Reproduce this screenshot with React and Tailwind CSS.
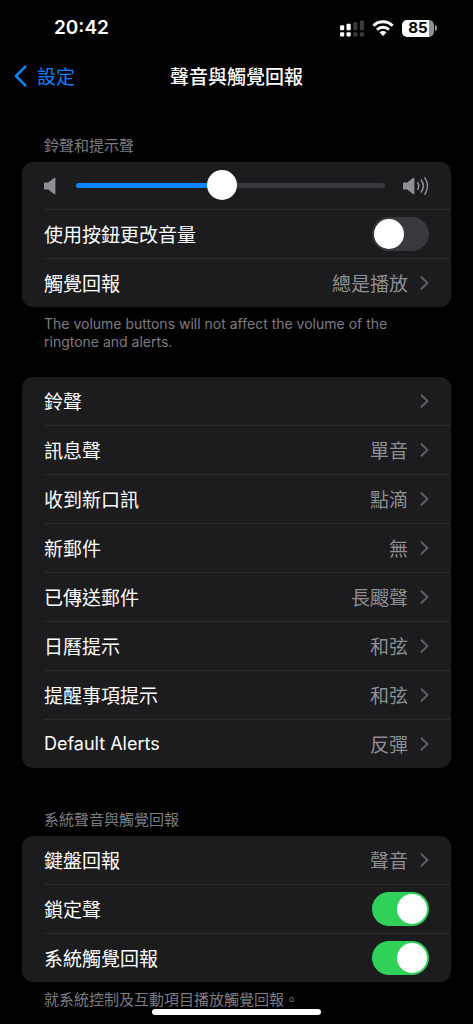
import React, { useState } from "react";

const alertSounds = [
  { label: "鈴聲", value: "" },
  { label: "訊息聲", value: "單音" },
  { label: "收到新口訊", value: "點滴" },
  { label: "新郵件", value: "無" },
  { label: "已傳送郵件", value: "長颼聲" },
  { label: "日曆提示", value: "和弦" },
  { label: "提醒事項提示", value: "和弦" },
  { label: "Default Alerts", value: "反彈", latin: true },
];

const StatusBar = () => (
  <div className="flex items-center justify-between h-14 pl-[54px] pr-9 font-['Inter',sans-serif]">
    <span className="text-[19px] leading-6 font-semibold">20:42</span>
    <div className="flex items-center gap-2">
      {/* Dual SIM signal */}
      <svg width="24" height="18" viewBox="0 0 24 18" aria-hidden="true">
        <g fill="#fff">
          <rect x="0" y="6.2" width="4.2" height="5" rx="1" />
          <rect x="6.500" y="4.700" width="4.200" height="6.500" rx="1" />
          <rect x="0" y="13.200" width="4.200" height="4.200" rx="1" />
          <rect x="6.500" y="13.200" width="4.200" height="4.200" rx="1" />
        </g>
        <g fill="#3a3a3c">
          <rect x="13.200" y="3.200" width="4.200" height="8" rx="1" />
          <rect x="19.800" y="1.500" width="4.200" height="9.700" rx="1" />
          <rect x="13.200" y="13.200" width="4.200" height="4.200" rx="1" />
          <rect x="19.800" y="13.200" width="4.200" height="4.200" rx="1" />
        </g>
      </svg>
      <svg width="22" height="16" viewBox="0 0 22 16" aria-hidden="true">
        <g fill="none" stroke="#fff" strokeWidth="3">
          <path d="M1.4 5.800a13.700 13.700 0 0 1 19.200 0" />
          <path d="M5 9.700a8.500 8.500 0 0 1 12 0" />
        </g>
        <path d="M11 16 7.500 12.500a5 5 0 0 1 7 0z" fill="#fff" />
      </svg>
      <div className="flex items-center gap-px">
        <span className="flex items-center justify-center w-8 h-[17px] rounded-[5px] bg-linear-to-r from-white from-85% to-[#8e8e93] to-85% text-black text-[15px] leading-4 font-bold">
          85
        </span>
        <span className="w-0.5 h-1.5 rounded-r-full bg-[#8e8e93]" />
      </div>
    </div>
  </div>
);

const NavBar = () => (
  <header className="grid grid-cols-[1fr_auto_1fr] items-center h-10 px-3.5">
    <a href="#settings" className="flex items-center gap-2.5 text-[#0a84ff]">
      <svg width="13" height="22" viewBox="0 0 13 22" aria-hidden="true">
        <path
          d="M11.3 1.7 2 11l9.3 9.3"
          fill="none"
          stroke="currentColor"
          strokeWidth="2.6"
          strokeLinecap="round"
          strokeLinejoin="round"
        />
      </svg>
      <span className="text-[19px] leading-6">設定</span>
    </a>
    <h1 className="text-[19px] leading-6 font-medium">聲音與觸覺回報</h1>
  </header>
);

const Card = ({ children }) => (
  <div className="rounded-[11px] bg-[#1c1c1e] pl-[22px] divide-y divide-[#2a2a2c]">
    {children}
  </div>
);

const SectionTitle = ({ children }) => (
  <h2 className="px-[22px] pb-2 text-[15px] leading-[18px] text-[#7c7c82]">
    {children}
  </h2>
);

// Inter runs wide, so Latin strings are set one pixel smaller than Chinese ones
const Footnote = ({ latin, children }) => (
  <p
    className={
      latin
        ? "px-[22px] pt-2 font-['Inter',sans-serif] text-[14px] leading-[18px] text-[#7c7c82]"
        : "px-[22px] pt-2 text-[15px] leading-[18px] text-[#7c7c82]"
    }>
    {children}
  </p>
);

const LinkRow = ({ label, value, latin }) => (
  <div>
    <a
      href="#detail"
      className="flex items-center h-12 pr-[22px] text-[19px] leading-6">
      <span
        className={
          latin ? "flex-1 font-['Inter',sans-serif] text-[18px]" : "flex-1"
        }>
        {label}
      </span>
      <span className="text-[#8e8e93]">{value}</span>
      <svg
        width="9"
        height="14"
        viewBox="0 0 9 14"
        className="ml-3"
        aria-hidden="true">
        <path
          d="M1.5 1.2 7.5 7l-6 5.8"
          fill="none"
          stroke="#5e5e62"
          strokeWidth="2"
          strokeLinecap="round"
          strokeLinejoin="round"
        />
      </svg>
    </a>
  </div>
);

const ToggleRow = ({ label, defaultChecked }) => (
  <div>
    <label className="flex items-center justify-between h-12 pr-[22px] text-[19px] leading-6">
      {label}
      <input
        type="checkbox"
        role="switch"
        defaultChecked={defaultChecked}
        className="appearance-none flex items-center w-[57px] h-[34px] p-0.5 rounded-full bg-[#39393d] checked:bg-[#30d158] checked:justify-end before:block before:size-[30px] before:rounded-full before:bg-white"
      />
    </label>
  </div>
);

const VolumeRow = () => {
  const [volume, setVolume] = useState(47);

  return (
    <div>
      <div className="flex items-center h-[47px] pr-[22px] text-[#8e8e93]">
        <svg width="12" height="18" viewBox="0 0 12 18" aria-hidden="true">
          <path
            d="M1.2 5.400h3L10 .9c.6-.5 1.400-.2 1.400.6v15c0 .8-.8 1.100-1.400.6l-5.800-4.500h-3C.5 12.600 0 12.100 0 11.400V6.600c0-.7.5-1.200 1.200-1.200z"
            fill="currentColor"
          />
        </svg>
        <input
          type="range"
          aria-label="鈴聲和提示聲"
          min="0"
          max="100"
          value={volume}
          onChange={(e) => setVolume(Number(e.target.value))}
          style={{ "--fill": `${volume}%` }}
          className="flex-1 min-w-0 ml-5 mr-[18px] h-[30px] appearance-none bg-transparent [&::-webkit-slider-runnable-track]:h-[5px] [&::-webkit-slider-runnable-track]:rounded-full [&::-webkit-slider-runnable-track]:bg-[linear-gradient(to_right,#0a84ff_var(--fill),#39393d_var(--fill))] [&::-webkit-slider-thumb]:appearance-none [&::-webkit-slider-thumb]:size-[30px] [&::-webkit-slider-thumb]:-mt-[13px] [&::-webkit-slider-thumb]:rounded-full [&::-webkit-slider-thumb]:bg-white"
        />
        <svg width="26" height="20" viewBox="0 0 26 20" aria-hidden="true">
          <path
            d="M1.200 6.400h3L10 1.900c.6-.5 1.400-.2 1.400.6v15c0 .8-.8 1.100-1.400.6l-5.800-4.500h-3C.5 13.600 0 13.100 0 12.400V7.600c0-.7.5-1.200 1.200-1.200z"
            fill="currentColor"
          />
          <path
            d="M14.800 6.800a6 6 0 0 1 0 6.400M18.300 4.200a10 10 0 0 1 0 11.600M21.900 1.900a14.500 14.500 0 0 1 0 16.200"
            fill="none"
            stroke="currentColor"
            strokeWidth="1.6"
            strokeLinecap="round"
          />
        </svg>
      </div>
    </div>
  );
};

const App = () => {
  return (
    <div
      lang="zh-Hant"
      className="min-h-screen bg-black text-white font-['Noto_Sans_CJK_TC','Inter',sans-serif]">
      <StatusBar />
      <NavBar />

      <main className="px-[22px] pt-10">
        <section>
          <SectionTitle>鈴聲和提示聲</SectionTitle>
          <Card>
            <VolumeRow />
            <ToggleRow label="使用按鈕更改音量" />
            <LinkRow label="觸覺回報" value="總是播放" />
          </Card>
          <Footnote latin>
            The volume buttons will not affect the volume of the ringtone and
            alerts.
          </Footnote>
        </section>

        <section className="mt-[26px]">
          <Card>
            {alertSounds.map((sound) => (
              <LinkRow key={sound.label} {...sound} />
            ))}
          </Card>
        </section>

        <section className="mt-[42px]">
          <SectionTitle>系統聲音與觸覺回報</SectionTitle>
          <Card>
            <LinkRow label="鍵盤回報" value="聲音" />
            <ToggleRow label="鎖定聲" defaultChecked />
            <ToggleRow label="系統觸覺回報" defaultChecked />
          </Card>
          <Footnote>就系統控制及互動項目播放觸覺回報。</Footnote>
        </section>
      </main>

      {/* Home indicator */}
      <div className="fixed inset-x-0 bottom-[9px] mx-auto w-[169px] h-1.5 rounded-full bg-white" />
    </div>
  );
};

export default App;
